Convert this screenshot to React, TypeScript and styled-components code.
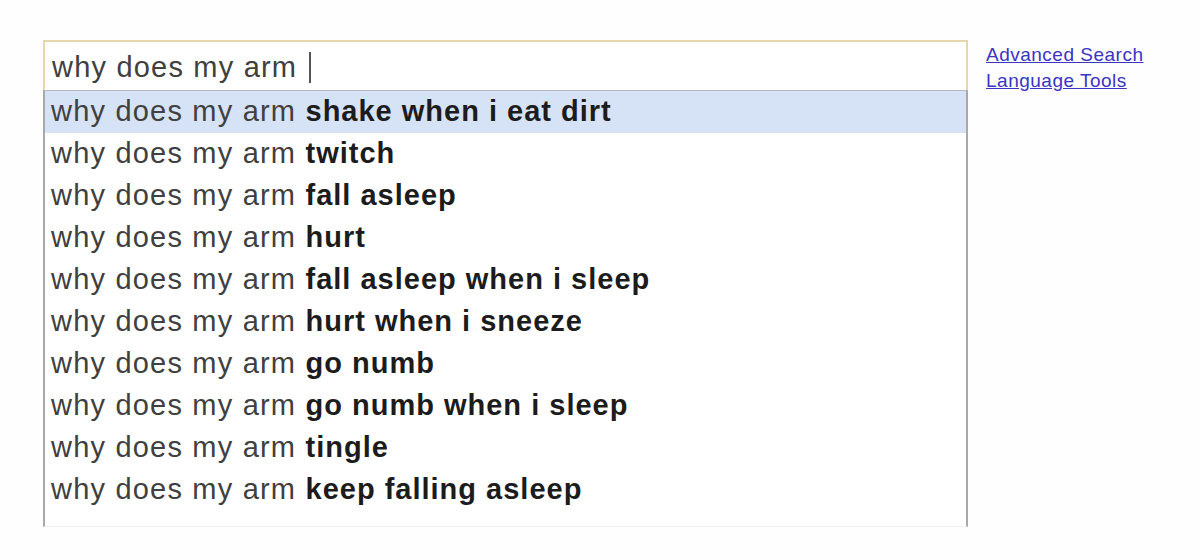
import styled, { createGlobalStyle } from 'styled-components';

const suggestions = [
    'shake when i eat dirt',
    'twitch',
    'fall asleep',
    'hurt',
    'fall asleep when i sleep',
    'hurt when i sneeze',
    'go numb',
    'go numb when i sleep',
    'tingle',
    'keep falling asleep',
];

const query = 'why does my arm';

function App() {
    return (
        <>
            <GlobalStyle />
            <Page>
                <SearchColumn>
                    <SearchInput>
                        {query}&nbsp;<Caret />
                    </SearchInput>
                    <Dropdown>
                        {suggestions.map((rest, i) => (
                            <Suggestion key={rest} $active={i === 0}>
                                {query} <b>{rest}</b>
                            </Suggestion>
                        ))}
                    </Dropdown>
                </SearchColumn>
                <Links>
                    <a href="#">Advanced Search</a>
                    <a href="#">Language Tools</a>
                </Links>
            </Page>
        </>
    );
}

export default App;

const GlobalStyle = createGlobalStyle`
    body {
        margin: 0;
        background: #ffffff;
        font-family: "Liberation Sans", Arial, sans-serif;
    }
`;

const Page = styled.div`
    display: flex;
    align-items: flex-start;
    padding: 40px 0 0 43px;
    height: 519px;
    overflow: hidden;
    background: #fefefe;
`;

const SearchColumn = styled.div`
    width: 925px;
    display: flex;
    flex-direction: column;
`;

const SearchInput = styled.div`
    box-sizing: border-box;
    height: 50px;
    display: flex;
    align-items: center;
    padding: 2px 0 0 7px;
    border: 2px solid #e6d7ad;
    border-bottom: none;
    font-size: 29px;
    letter-spacing: 1.2px;
    color: #404040;
    background: #ffffff;
`;

const Caret = styled.span`
    display: inline-block;
    width: 2px;
    height: 31px;
    margin-left: 2px;
    background: #555555;
`;

const Dropdown = styled.div`
    border: 2px solid #a9a9a9;
    border-bottom: 1px solid #f0f0f0;
    border-top: 1px solid #b8b8b8;
    padding-bottom: 15px;
    background: #ffffff;
`;

const Suggestion = styled.div<{ $active: boolean }>`
    height: 42px;
    line-height: 40px;
    padding-left: 6px;
    font-size: 29px;
    letter-spacing: 1.2px;
    white-space: nowrap;
    color: #404040;
    background: ${({ $active }) => ($active ? '#d6e2f6' : 'transparent')};

    b {
        color: #1c1c1c;
        font-weight: bold;
        letter-spacing: 1px;
    }
`;

const Links = styled.div`
    display: flex;
    flex-direction: column;
    margin-left: 18px;
    padding-top: 2px;
    line-height: 26px;

    a {
        font-size: 19px;
        letter-spacing: 0.5px;
        color: #3b34c4;
        text-decoration: underline;
    }
`;
